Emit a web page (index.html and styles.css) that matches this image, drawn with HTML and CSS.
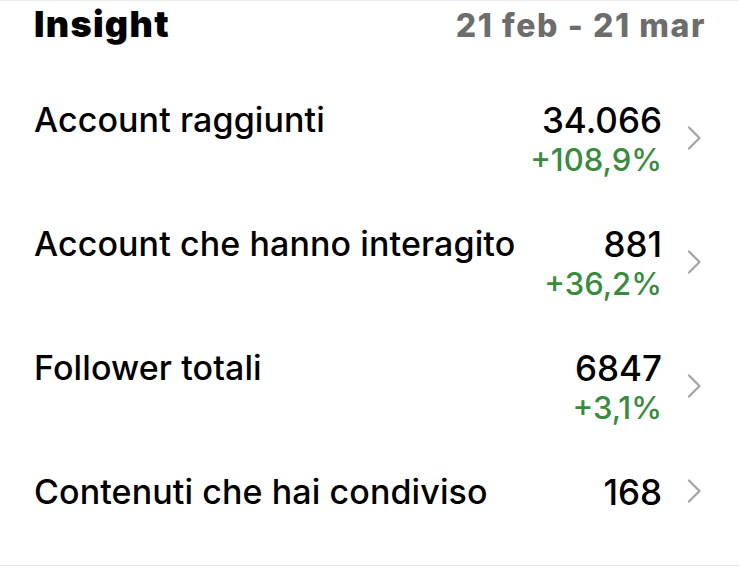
FILE: index.html
```html
<!DOCTYPE html>
<html lang="it">
<head>
<meta charset="utf-8">
<link rel="stylesheet" href="styles.css">
</head>
<body>
<div class="screen">
  <header class="head">
    <h1 class="title">Insight</h1>
    <div class="range">21 feb - 21 mar</div>
  </header>
  <ul class="list">
    <li class="row">
      <span class="label">Account raggiunti</span>
      <span class="vals"><span class="num">34.066</span><span class="delta">+108,9%</span></span>
      <svg class="chev" width="14" height="24" viewBox="0 0 14 24"><path d="M2 1.5 L12.5 12 L2 22.5" fill="none" stroke="#a3a3a3" stroke-width="2.2" stroke-linecap="round" stroke-linejoin="round"/></svg>
    </li>
    <li class="row">
      <span class="label">Account che hanno interagito</span>
      <span class="vals"><span class="num">881</span><span class="delta">+36,2%</span></span>
      <svg class="chev" width="14" height="24" viewBox="0 0 14 24"><path d="M2 1.5 L12.5 12 L2 22.5" fill="none" stroke="#a3a3a3" stroke-width="2.2" stroke-linecap="round" stroke-linejoin="round"/></svg>
    </li>
    <li class="row">
      <span class="label">Follower totali</span>
      <span class="vals"><span class="num">6847</span><span class="delta">+3,1%</span></span>
      <svg class="chev" width="14" height="24" viewBox="0 0 14 24"><path d="M2 1.5 L12.5 12 L2 22.5" fill="none" stroke="#a3a3a3" stroke-width="2.2" stroke-linecap="round" stroke-linejoin="round"/></svg>
    </li>
    <li class="row single">
      <span class="label">Contenuti che hai condiviso</span>
      <span class="vals"><span class="num">168</span></span>
      <svg class="chev" width="14" height="24" viewBox="0 0 14 24"><path d="M2 1.5 L12.5 12 L2 22.5" fill="none" stroke="#a3a3a3" stroke-width="2.2" stroke-linecap="round" stroke-linejoin="round"/></svg>
    </li>
  </ul>
</div>
</body>
</html>
```

FILE: styles.css
```css
* { box-sizing: border-box; }
html, body { margin: 0; padding: 0; background: #fff; }
body { font-family: Inter, "Liberation Sans", sans-serif; color: #000; }
.screen {
  width: 739px;
  height: 566px;
  border-top: 1px solid #ececec;
  border-bottom: 1px solid #e4e4e4;
  overflow: hidden;
}
.head {
  display: flex;
  justify-content: space-between;
  align-items: baseline;
  padding: 3px 33px 0 34px;
  height: 99px;
}
.title {
  margin: 0;
  font-size: 36px;
  font-weight: 900;
  letter-spacing: 1.3px;
  line-height: 40px;
}
.range {
  font-size: 32px;
  font-weight: 800;
  color: #6d6d6d;
  letter-spacing: 1.6px;
  line-height: 40px;
}
.list { list-style: none; margin: 0; padding: 0; }
.row {
  display: flex;
  align-items: flex-start;
  padding: 0 38px 0 34px;
  height: 124px;
}
.label {
  flex: 1;
  font-size: 34px;
  font-weight: 500;
  line-height: 40px;
  letter-spacing: 0.1px;
}
.vals {
  display: flex;
  flex-direction: column;
  align-items: flex-end;
}
.num { font-size: 35px; font-weight: 500; line-height: 40px; }
.delta { font-size: 31px; font-weight: 500; line-height: 40px; color: #3a8b3f; }
.chev { margin-left: 25px; margin-top: 26px; flex: none; }
.single .chev { margin-top: 7px; }
```
